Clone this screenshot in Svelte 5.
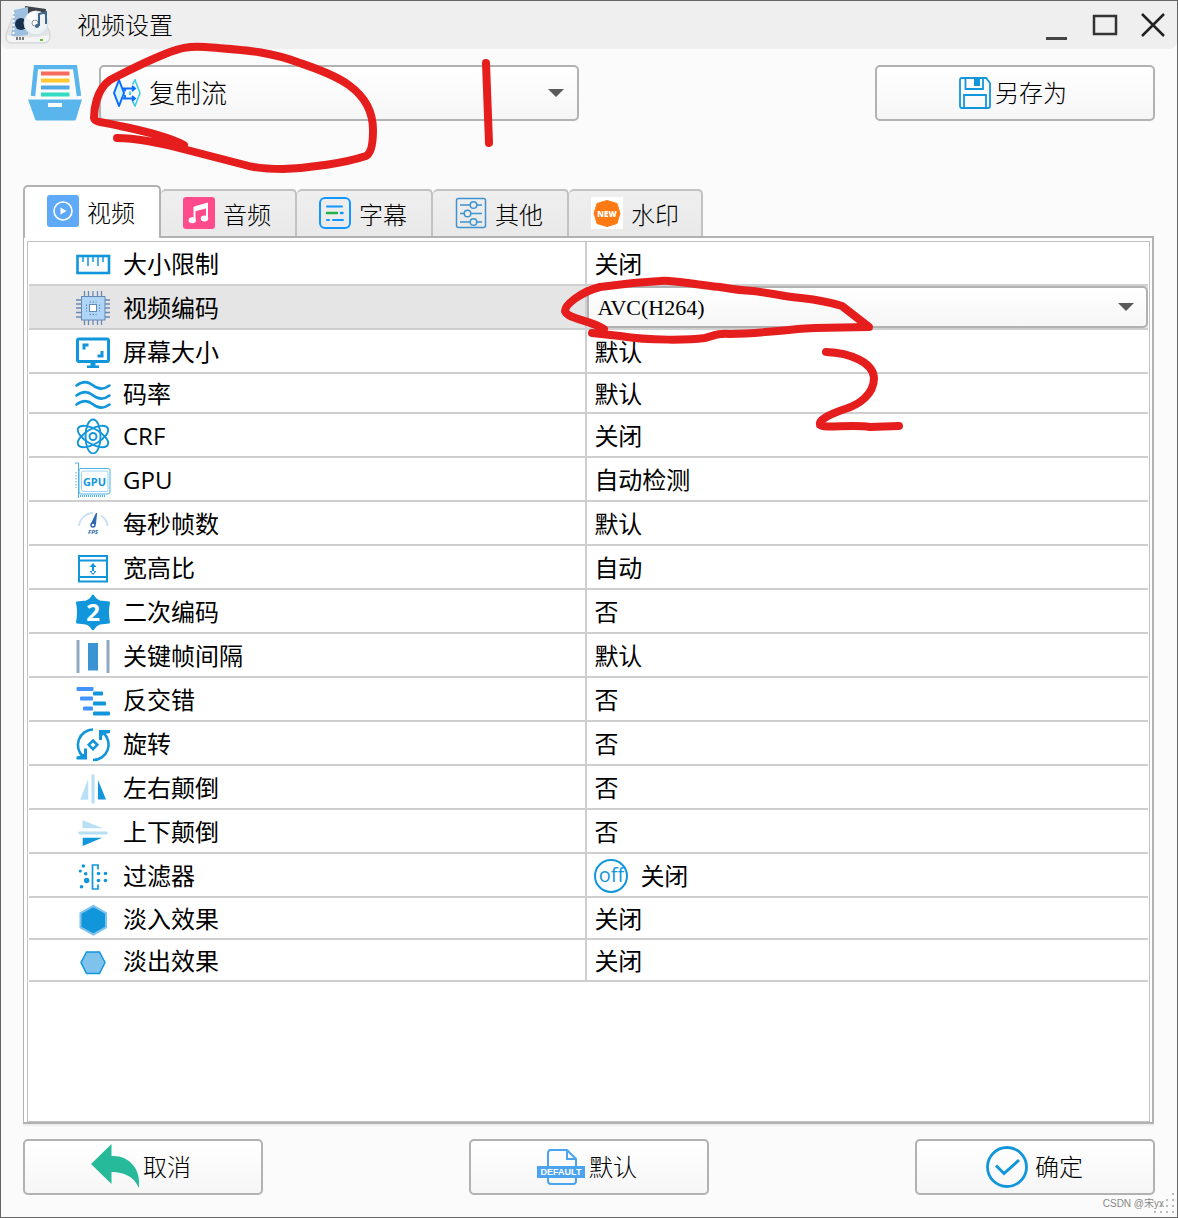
<script>
  const tabs = [
    { id: 'video', label: '视频', icon: '<rect width="32" height="32" rx="3" fill="#5ea9f8"/><circle cx="16" cy="16" r="9" fill="none" stroke="#fff" stroke-width="1.600"/><path d="M13.500 12.500v7l6-3.500z" fill="#fff"/>' },
    { id: 'audio', label: '音频', icon: '<rect width="32" height="32" rx="3" fill="#ff4b8b"/><path d="M11 9.500 25 5.500V11L11 14.500z" fill="#fff"/><path d="M11.500 10v12.500M24 7v14" stroke="#fff" stroke-width="2"/><ellipse cx="9.300" cy="23.300" rx="3.700" ry="3" fill="#fff"/><ellipse cx="21.500" cy="21.500" rx="3.700" ry="3" fill="#fff"/>' },
    { id: 'subtitle', label: '字幕', icon: '<rect x="1" y="1" width="30" height="30" rx="5" fill="none" stroke="#1296ff" stroke-width="2"/><path d="M8 9.500h15M14 23h10M8 23h2" stroke="#1296ff" stroke-width="2" stroke-linecap="round"/><path d="M8 16h10" stroke="#22b24c" stroke-width="2.500" stroke-linecap="round"/><path d="M22 16h1.500" stroke="#1296ff" stroke-width="2.500" stroke-linecap="round"/>' },
    { id: 'other', label: '其他', icon: '<rect x="1.500" y="1.500" width="29" height="29" rx="2" fill="none" stroke="#3f93cf" stroke-width="1.500"/><path d="M5 8h22M5 16.500h22M5 25h22" stroke="#3f93cf" stroke-width="1.500"/><g fill="#ececec" stroke="#3f93cf" stroke-width="1.500"><circle cx="18.500" cy="8" r="3.300"/><circle cx="12.500" cy="16.500" r="3.300"/><circle cx="18.500" cy="25" r="3.300"/></g>' },
    { id: 'watermark', label: '水印', icon: '<rect width="32" height="32" fill="#fff"/><path d="M16 3.500 21 5 26 6.500 27.500 11.500 29 16.500 27.500 21 26 26.500 21 28 16 29.500 11 28 6 26.500 4.500 21 3 16.500 4.500 11.500 6 6.500 11 5z" fill="#ff7a12" stroke="#ff7a12" stroke-linejoin="round"/><text x="16" y="19.500" font-family="Open Sans, sans-serif" font-size="8" font-weight="800" fill="#fff" text-anchor="middle">NEW</text>' }
  ];

  const rows = [
    { label: '大小限制', value: '关闭', icon: '<rect x="2.500" y="10" width="31.500" height="17" fill="none" stroke="#1296db" stroke-width="2.600"/><path d="M8 11v5M13 11v9M18 11v5M23 11v9M28 11v5" stroke="#1296db" stroke-width="1.500"/>' },
    { label: '视频编码', editing: true, icon: '<path d="M9.500 1v34M13.500 1v34M18 1v34M22.500 1v34M26.500 1v34M1 10h34M1 14h34M1 18h34M1 22.500h34M1 27h34" stroke="#6b88b3" stroke-width="1.300"/><rect x="6.500" y="6.500" width="23.500" height="23.500" fill="#aed4f6" stroke="#6488b8"/><rect x="14.500" y="14.500" width="7" height="7" fill="#fff" stroke="#6488b8"/><path d="M14.500 12h7M14.500 24.500h7M11.500 14.500v7M24.500 14.500v7" stroke="#6488b8" stroke-dasharray="1.500 1.500"/>' },
    { label: '屏幕大小', value: '默认', icon: '<rect x="2.500" y="5" width="31" height="22.500" rx="1.500" fill="none" stroke="#1296db" stroke-width="3"/><path d="M9 15.500v-4.500h4.500M27 17v5h-4.500" fill="none" stroke="#1296db" stroke-width="3"/><path d="M15.500 28h5v3.500H24V34H12v-2.500h3.500z" fill="#1296db"/>' },
    { label: '码率', value: '默认', size: 'tight', icon: '<g fill="none" stroke="#1296db" stroke-width="2.600" stroke-linecap="round"><path d="M1.500 9.500c6-4.500 11-4.500 16-.500s11 5 17 .500"/><path d="M1.500 19.500c6-4.500 11-4.500 16-.500s11 5 17 .500"/><path d="M1.500 28.500c6-4.500 11-4.500 16-.500s11 5 17 .500"/></g>' },
    { label: 'CRF', value: '关闭', icon: '<g fill="none" stroke="#1296db" stroke-width="1.900"><ellipse cx="18" cy="18.500" rx="7.500" ry="17"/><ellipse cx="18" cy="18.500" rx="7.500" ry="17" transform="rotate(60 18 18.500)"/><ellipse cx="18" cy="18.500" rx="7.500" ry="17" transform="rotate(-60 18 18.500)"/><circle cx="18" cy="18.500" r="3.500"/></g>' },
    { label: 'GPU', value: '自动检测', icon: '<g fill="none" stroke="#4bb0e6"><path d="M0 1h3.500v35"/><rect x="4" y="6.500" width="31" height="25.500" rx="2"/><rect x="6.500" y="9" width="26.500" height="20.500" rx="2" stroke="#9bd3f1"/><path d="M1 10v16" stroke-dasharray="1.500 1.500"/><path d="M5 34h26" stroke-width="2" stroke-dasharray="1 1"/></g><text x="19.500" y="23.500" font-family="Open Sans, sans-serif" font-size="11" font-weight="700" fill="#1296db" text-anchor="middle">GPU</text>' },
    { label: '每秒帧数', value: '默认', icon: '<path d="M4 20A14.500 14.500 0 0 1 18 7M26 9.500A14.500 14.500 0 0 1 32.500 20" fill="none" stroke="#cbdff2" stroke-width="2"/><path d="M21.500 7 16.500 17.500 20.500 18z" fill="#2867b2" stroke="#2867b2"/><circle cx="18" cy="19" r="2" fill="#fff" stroke="#2867b2" stroke-width="1.500"/><text x="18" y="28" font-family="Open Sans, sans-serif" font-size="6" font-weight="700" font-style="italic" fill="#2867b2" text-anchor="middle">FPS</text>' },
    { label: '宽高比', value: '自动', icon: '<g fill="none" stroke="#1296db" stroke-width="2"><rect x="4" y="6" width="28" height="25.500"/><path d="M4 10.500h28M4 27h28"/></g><path d="M17 15h2v8h-2zM18 13l3.500 4h-7zM18 25l3.500-4h-7z" fill="#1296db"/>' },
    { label: '二次编码', value: '否', icon: '<path d="M18 1.500Q21 6.500 25 7.500Q29.500 8 34 8.500Q32 18.500 34 28.500Q29.500 29 25 29.500Q21 30.500 18 35.500Q15 30.500 11 29.500Q6.500 29 2 28.500Q4 18.500 2 8.500Q6.500 8 11 7.500Q15 6.500 18 1.500z" fill="#1296db" stroke="#1296db" stroke-width="2" stroke-linejoin="round"/><text x="18" y="27" font-family="Noto Sans, sans-serif" font-size="24" font-weight="700" fill="#fff" text-anchor="middle">2</text>' },
    { label: '关键帧间隔', value: '默认', icon: '<path d="M1.500 2h3v33h-3zM31.500 2h3v33h-3z" fill="#8fa8c4"/><path d="M13 5h10v27.500H13z" fill="#3b93d4"/>' },
    { label: '反交错', value: '否', icon: '<g fill="#4192ff"><rect x="1.500" y="5" width="17" height="4" rx="1"/><rect x="5" y="14.500" width="13" height="4" rx="1"/><rect x="8" y="24.500" width="10" height="4" rx="1"/></g><g fill="#1296db"><rect x="18" y="9.500" width="10" height="4" rx="1"/><rect x="18" y="19.500" width="13" height="4" rx="1"/><rect x="18" y="29.500" width="17" height="4" rx="1"/></g>' },
    { label: '旋转', value: '否', icon: '<g fill="none" stroke="#1296db" stroke-width="2.600"><path d="M18 3.500A15.500 15.500 0 0 0 8 30.500M18 34A15.500 15.500 0 0 0 28.500 7"/><path d="M18 14.500l4.300 4.300-4.300 4.300-4.300-4.300z"/></g><path d="M24 4h11v3l-5.500 1-2.500 2v4h-3zM12 33.500H1.500v-3L6.500 29.500l2.500-2v-5h3z" fill="#1296db"/>' },
    { label: '左右颠倒', value: '否', icon: '<path d="M13 10v19.500H5.500zM16.700 5.500q1.300-2.500 2.600 0v27q-1.300 2.500-2.600 0z" fill="#b8e0f4" stroke="#b8e0f4" stroke-width=".5"/><path d="M23 10v19.500h8z" fill="#1296db"/>' },
    { label: '上下颠倒', value: '否', icon: '<path d="M7.700 6.500v7.500h19zM4.500 17.700h27q2.500 1.300 0 2.600h-27q-2.500-1.300 0-2.600z" fill="#b8e0f4" stroke="#b8e0f4" stroke-width=".5"/><path d="M7.700 23.700h19.500L7.700 32z" fill="#1296db"/>' },
    { label: '过滤器', value: '关闭', off: true, icon: '<g fill="#1296db"><circle cx="8.300" cy="8" r="1.800"/><circle cx="5.300" cy="13" r="1.600"/><circle cx="10.700" cy="15.700" r="1.800"/><circle cx="11.700" cy="22.500" r="2.700"/><circle cx="6.500" cy="28.700" r="1.800"/><circle cx="23.500" cy="15.500" r="1.800"/><circle cx="30.500" cy="15.500" r="1.800"/><circle cx="23.500" cy="22.500" r="1.800"/><circle cx="30.500" cy="22.500" r="1.800"/></g><path d="M23 11.500V7h-5.500v24H23v-4.500" fill="none" stroke="#1296db" stroke-width="1.700"/>' },
    { label: '淡入效果', value: '关闭', size: 'snug', icon: '<path d="M18.300 5 31 12v14.500L18.300 33.500 5.500 26.500V12z" fill="#1296db" stroke="#7fc2ec" stroke-width="2"/>' },
    { label: '淡出效果', value: '关闭', size: 'snug', icon: '<path d="M11.500 9h13L30 19.500l-5.500 11h-13L6 19.500z" fill="#7fc2ec" stroke="#1296db" stroke-width="1.500"/>' }
  ];

  const grip = [[18, 0], [12, 6], [18, 6], [6, 12], [12, 12], [18, 12], [0, 18], [6, 18], [12, 18], [18, 18]];

  let active = $state('video');
</script>

<div class="window">
  <header class="titlebar">
    <svg class="app-icon" viewBox="0 0 46 40" aria-hidden="true">
      <path d="M9 8h28l8 20q1 10-6 10H6q-6 0-5-9z" fill="#e3e4e5" stroke="#cfd1d3" />
      <path d="M20 1 41 4l-2 13-18-4z" fill="#3c4248" />
      <path d="M9 5 23 2v28L6 32z" fill="#9dbfe0" />
      <path d="M8.500 7v24" stroke="#fff" stroke-width="2" stroke-dasharray="2 2" />
      <circle cx="16" cy="19" r="6" fill="#16304e" />
      <circle cx="31" cy="18" r="12" fill="#edf2f5" stroke="#d3dde4" />
      <path d="M31 18 21 12q4-6 10-6z" fill="#fff" />
      <circle cx="30" cy="18" r="3" fill="#fff" stroke="#8b969f" />
      <path d="M34 21V9l7-2v12" fill="none" stroke="#3f668b" stroke-width="2" />
      <circle cx="32" cy="21" r="2" fill="#3f668b" />
      <path d="M2 30q21 5 42 0v4q-2 3-6 3H7q-4 0-5-3z" fill="#f5f5f5" />
      <path d="M11 33.500h9" stroke="#777" stroke-width="3" stroke-dasharray="2 1" />
      <path d="M35 35h3" stroke="#59c434" stroke-width="2" />
    </svg>
    <h1>视频设置</h1>
    <div class="controls">
      <button aria-label="最小化"><svg viewBox="0 0 28 28"><path d="M3 27.500h21" stroke="#444" stroke-width="3" /></svg></button>
      <button aria-label="最大化"><svg viewBox="0 0 28 28"><rect x="3" y="5" width="22" height="18" fill="none" stroke="#333" stroke-width="2.500" /></svg></button>
      <button aria-label="关闭窗口"><svg viewBox="0 0 28 28"><path d="M3 3 25 25M25 3 3 25" stroke="#222" stroke-width="2.500" /></svg></button>
    </div>
  </header>

  <div class="preset">
    <svg class="drawer" viewBox="0 0 56 56" aria-hidden="true">
      <path d="M5 31 8 2h39l4 29" fill="none" stroke="#5ab5ec" stroke-width="4.500" />
      <path d="M13 8.500h28.500" stroke="#f76b5f" stroke-width="4" />
      <path d="M13 15.500h28.500" stroke="#ffc933" stroke-width="4" />
      <path d="M13 22.500h28.500" stroke="#4fa9e4" stroke-width="4" />
      <path d="M13 29.500h28.500" stroke="#33dcc0" stroke-width="4" />
      <path d="M0 34.500h54l-6 19.500q0 1.500-2 1.500H9q-2 0-2-1.500z" fill="#5ab5ec" />
      <path d="M20 40h14" stroke="#fff" stroke-width="4" />
    </svg>
    <label class="combo">
      <svg class="stream" viewBox="0 0 28 28" aria-hidden="true">
        <path d="M6 1 11 14 6 27 1 14z" fill="#d7f5fd" stroke="#0a6cff" stroke-width="2" stroke-linejoin="round" />
        <path d="M19.500 5.500 22 1 27 14l-5 13-2.500-4.500" fill="none" stroke="#3fd0e2" stroke-width="1.600" />
        <path d="M10 9.500h12M10 19.500h12M19 7 22 9.500 19 12M19 17l3 2.500-3 2.500M12 9.500v3M12 16v3" fill="none" stroke="#0a6cff" stroke-width="1.800" />
        <path d="M17 12.500v3.500" stroke="#3fd0e2" stroke-width="2" />
      </svg>
      <select aria-label="预设"><option>复制流</option></select>
      <svg class="arrow" viewBox="0 0 16 8" aria-hidden="true"><path d="M0 0h16L8 8z" fill="#5a5a5a" /></svg>
    </label>
    <button class="push save">
      <svg class="i32" viewBox="0 0 32 32" aria-hidden="true">
        <g fill="none" stroke="#1296db" stroke-width="1.800">
          <path d="M3 1h24l4 5v23q0 2-2 2H3q-2 0-2-2V3q0-2 2-2zM6.500 1v11H24V1M5 31V18h22v13" />
        </g>
        <path d="M15 1h6v8h-6z" fill="#1296db" />
      </svg>
      <span>另存为</span>
    </button>
  </div>

  <div class="tabs" role="tablist">
    {#each tabs as tab (tab.id)}
      <button role="tab" class="tab" class:active={active === tab.id} aria-selected={active === tab.id} onclick={() => (active = tab.id)}>
        <svg class="i32" viewBox="0 0 32 32" aria-hidden="true">{@html tab.icon}</svg>
        <span>{tab.label}</span>
      </button>
    {/each}
  </div>

  <main class="panel">
    <div class="sheet">
      <table>
        <colgroup><col class="names" /><col /></colgroup>
        <tbody>
          {#each rows as row (row.label)}
            <tr class={row.size} class:selected={row.editing}>
              <th scope="row">
                <div class="cell">
                  <svg class="i36" viewBox="0 0 36 36" aria-hidden="true">{@html row.icon}</svg>
                  <span>{row.label}</span>
                </div>
              </th>
              <td>
                {#if row.editing}
                  <label class="combo codec">
                    <select aria-label={row.label}><option>AVC(H264)</option></select>
                    <svg class="arrow" viewBox="0 0 16 8" aria-hidden="true"><path d="M0 0h16L8 8z" fill="#5a5a5a" /></svg>
                  </label>
                {:else}
                  <div class="cell value">
                    {#if row.off}<span class="off">off</span>{/if}
                    <span>{row.value}</span>
                  </div>
                {/if}
              </td>
            </tr>
          {/each}
        </tbody>
      </table>
    </div>
  </main>

  <footer class="actions">
    <button class="push">
      <svg class="i48" viewBox="0 0 48 48" aria-hidden="true"><path d="M0 21 20.500 1v12C38 12 48 26 48 38v7C43 34 34 29 20.500 29v12z" fill="#26b99a" /></svg>
      <span>取消</span>
    </button>
    <button class="push">
      <svg class="i48" viewBox="0 0 48 48" aria-hidden="true">
        <path d="M12 7h18l9 9v22q0 3-3 3H14q-3 0-3-3V10q0-3 3-3M30 7v9h9" fill="none" stroke="#4da4ee" stroke-width="2" />
        <path d="M0 23h48v12H0z" fill="#4da4ee" />
        <text x="24" y="32" font-family="Liberation Sans, sans-serif" font-size="9" font-weight="700" fill="#fff" text-anchor="middle">DEFAULT</text>
      </svg>
      <span>默认</span>
    </button>
    <button class="push">
      <svg class="i48" viewBox="0 0 48 48" aria-hidden="true">
        <circle cx="24" cy="24" r="19.500" fill="none" stroke="#1296db" stroke-width="2.800" />
        <path d="M13 22.500l8 8L36 17" fill="none" stroke="#1296db" stroke-width="3" />
      </svg>
      <span>确定</span>
    </button>
  </footer>

  <svg class="grip" viewBox="0 0 20 20" aria-hidden="true">
    {#each grip as [x, y]}<rect {x} {y} width="2" height="2" fill="#bcbcbc" />{/each}
  </svg>
  <span class="mark">CSDN @宋yx</span>

  <svg class="ink" viewBox="0 0 940 460" aria-hidden="true">
    <g fill="none" stroke="#e61d1d" stroke-width="8" stroke-linecap="round" stroke-linejoin="round">
      <path d="M117 138C140 138 165 144 187 150L245 165C255 168 265 169 283 169C310 168 345 163 366 156C372 153 373 140 373 130C373 85 325 72 300 63C265 50 240 50 205 47C188 46 180 48 165 54C140 64 120 75 110 80C96 90 94 110 94 118C95 123 105 122 120 126C150 132 170 138 184 145" />
      <path d="M486 63 489 143" />
      <path d="M592 333 620 336C650 341 690 340 705 338C715 335 720 333 730 334C770 333 800 328 815 328L869 327L842 306C820 299 805 299 785 296C750 289 745 292 720 287C690 284 670 279 660 281C640 282 620 284 600 287C580 292 565 305 565 311C567 319 590 320 604 329" />
      <path d="M826 352C850 353 873 362 874 378C874 395 858 405 845 409C830 414 818 420 820 425C825 429 850 424 870 427L899 426" />
    </g>
  </svg>
</div>

<style>
  :global(body) {
    background: #fbfbfb;
  }
  .window, .window :global(*) {
    box-sizing: border-box;
  }
  .window {
    position: relative;
    display: flex;
    flex-direction: column;
    min-height: 100vh;
    border: 1px solid #666;
    background: #fbfbfb;
    color: #000;
    font: 300 24px/32px 'Noto Sans CJK SC', sans-serif;
  }
  svg {
    display: block;
    flex: none;
  }
  button, select {
    margin: 0;
    padding: 0;
    border: 0;
    background: none;
    color: inherit;
    font: inherit;
  }
  .titlebar {
    display: flex;
    align-items: center;
    height: 48px;
    padding: 0 10px 0 4px;
    border-radius: 0 0 8px 8px;
    background: #efefef;
  }
  .app-icon {
    width: 46px;
    height: 40px;
  }
  h1 {
    flex: 1;
    margin: 0 0 0 26px;
    padding-bottom: 2px;
    font-size: 24px;
    font-weight: inherit;
  }
  .controls {
    display: flex;
    gap: 20px;
  }
  .controls svg {
    width: 28px;
    height: 28px;
    overflow: visible;
  }
  .preset {
    display: flex;
    align-items: center;
    padding: 16px 22px 64px 27px;
  }
  .drawer {
    width: 56px;
    height: 56px;
  }
  .combo, .push {
    display: flex;
    align-items: center;
    height: 56px;
    border: 2px solid #b2b2b2;
    border-radius: 5px;
    background: linear-gradient(#fff, #f6f6f6);
  }
  .preset .combo {
    flex: 0 1 480px;
    margin-left: 15px;
    padding: 0 13px 0 12px;
    font-size: 26px;
  }
  .stream {
    width: 28px;
    height: 28px;
    margin-right: 8px;
  }
  select {
    flex: 1;
    min-width: 0;
    height: 36px;
    padding-bottom: 2px;
    appearance: none;
    outline: 0;
  }
  .arrow {
    width: 16px;
    height: 8px;
  }
  .push {
    justify-content: center;
    flex: 0 1 240px;
    gap: 4px;
    padding-right: 4px;
  }
  .push span {
    padding-bottom: 2px;
  }
  .save {
    flex-basis: 280px;
    margin-left: auto;
  }
  .i32 {
    width: 32px;
    height: 32px;
  }
  .i36 {
    width: 36px;
    height: 36px;
  }
  .i48 {
    width: 48px;
    height: 48px;
  }
  .tabs {
    position: relative;
    display: flex;
    align-items: flex-end;
    padding: 0 22px;
  }
  .tab {
    display: flex;
    align-items: center;
    gap: 8px;
    height: 47px;
    padding: 0 24px 2px 22px;
    border: 2px solid #c2c2c2;
    border-width: 2px 2px 0 0;
    border-radius: 5px 5px 0 0;
    background: linear-gradient(#efefef, #e9e9e9);
  }
  .tab span {
    padding-top: 2px;
  }
  .tab:last-child {
    padding-right: 22px;
  }
  .tab.active {
    height: 53px;
    margin-bottom: -2px;
    padding-bottom: 4px;
    border-color: #b2b2b2;
    border-left-width: 2px;
    background: #fff;
  }
  .panel {
    display: flex;
    flex: 1;
    margin: 0 23px 0 22px;
    padding: 3px 2px 0 3px;
    border: solid #b2b2b2;
    border-width: 2px 2px 2px 1px;
    background: #fff;
    box-shadow: 0 2px #eee;
  }
  .sheet {
    flex: 1;
    padding: 0 1px;
    border: 1px solid #c2c2c2;
  }
  table {
    width: 100%;
    table-layout: fixed;
    border-spacing: 0;
    font-weight: 400;
    font-family: 'Open Sans', 'Noto Sans CJK SC', sans-serif;
  }
  .names {
    width: 49.9%;
  }
  th, td {
    height: 44px;
    padding: 0;
    border-bottom: 2px solid #cfcfcf;
    font-weight: inherit;
    text-align: left;
  }
  th {
    border-right: 2px solid #cfcfcf;
  }
  .tight th, .tight td {
    height: 40px;
  }
  .snug th, .snug td {
    height: 42px;
  }
  .selected {
    background: #e5e5e5;
  }
  .cell {
    display: flex;
    align-items: center;
    gap: 12px;
    height: 36px;
    padding-left: 46px;
    margin-top: 2px;
  }
  .value {
    padding-left: 7px;
  }
  .off {
    width: 34px;
    height: 34px;
    border: 2px solid #1296db;
    border-radius: 50%;
    color: #1296db;
    font-size: 20px;
    line-height: 28px;
    text-align: center;
  }
  .codec {
    height: 42px;
    padding: 0 12px 0 8px;
    font: 22px/32px 'Liberation Serif', serif;
  }
  .codec select {
    padding: 2px 0 0;
  }
  .actions {
    display: flex;
    justify-content: space-between;
    gap: 16px;
    padding: 15px 22px 22px;
  }
  .grip {
    position: absolute;
    right: 3px;
    bottom: 4px;
    width: 20px;
    height: 20px;
  }
  .mark {
    position: absolute;
    right: 13px;
    bottom: 5px;
    color: #888;
    font: 10px/16px 'Liberation Sans', 'Noto Sans CJK SC', sans-serif;
  }
  .ink {
    position: absolute;
    top: -1px;
    left: -1px;
    width: 940px;
    height: 460px;
    pointer-events: none;
  }
</style>
